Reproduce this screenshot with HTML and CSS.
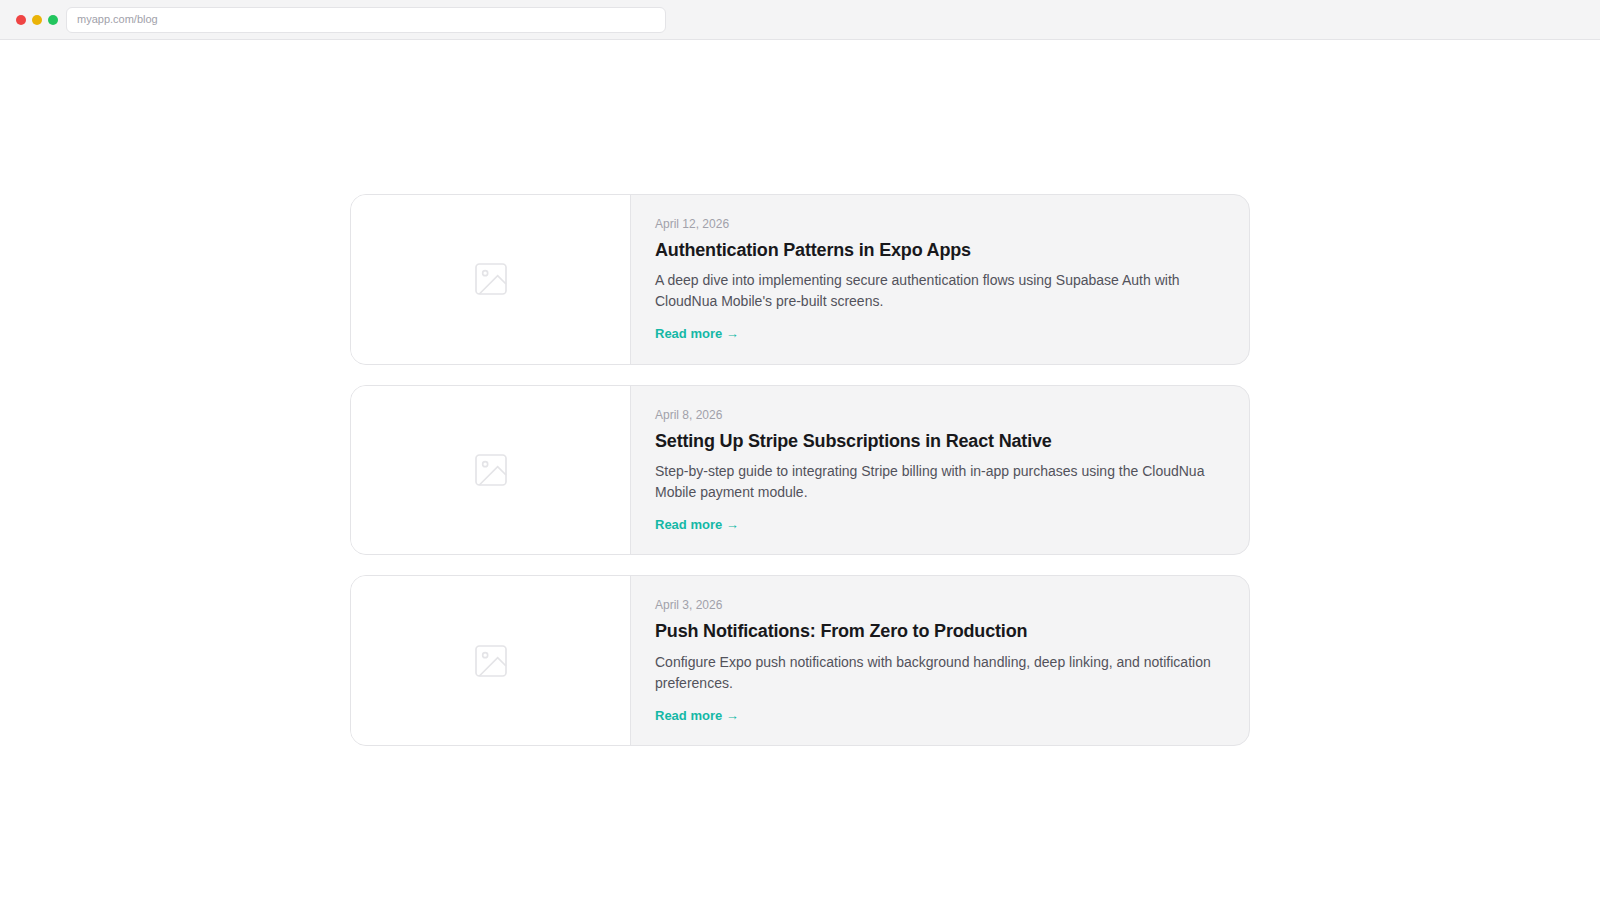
FILE: index.html
```html
<!DOCTYPE html>
<html lang="en">
<head>
  <meta charset="UTF-8" />
  <meta name="viewport" content="width=device-width, initial-scale=1.0"/>
  <title>Blog</title>
  <link rel="stylesheet" href="styles.css">
</head>
<body>

  <div class="browser-bar">
    <span class="dot red"></span>
    <span class="dot yellow"></span>
    <span class="dot green"></span>
    <div class="url">myapp.com/blog</div>
  </div>

  <main class="content">
    <div class="posts">
      <article class="post">
        <div class="thumb">
          <svg class="thumb-icon" viewBox="0 0 24 24"><rect x="3" y="3" width="18" height="18" rx="2"/><circle cx="8.5" cy="8.5" r="1.5"/><path d="M21 15l-5-5L5 21"/></svg>
        </div>
        <div class="post-body">
          <div class="date">April 12, 2026</div>
          <h2>Authentication Patterns in Expo Apps</h2>
          <p>A deep dive into implementing secure authentication flows using Supabase Auth with CloudNua Mobile's pre-built screens.</p>
          <a class="more">Read more →</a>
        </div>
      </article>

      <article class="post">
        <div class="thumb">
          <svg class="thumb-icon" viewBox="0 0 24 24"><rect x="3" y="3" width="18" height="18" rx="2"/><circle cx="8.5" cy="8.5" r="1.5"/><path d="M21 15l-5-5L5 21"/></svg>
        </div>
        <div class="post-body">
          <div class="date">April 8, 2026</div>
          <h2>Setting Up Stripe Subscriptions in React Native</h2>
          <p>Step-by-step guide to integrating Stripe billing with in-app purchases using the CloudNua Mobile payment module.</p>
          <a class="more">Read more →</a>
        </div>
      </article>

      <article class="post">
        <div class="thumb">
          <svg class="thumb-icon" viewBox="0 0 24 24"><rect x="3" y="3" width="18" height="18" rx="2"/><circle cx="8.5" cy="8.5" r="1.5"/><path d="M21 15l-5-5L5 21"/></svg>
        </div>
        <div class="post-body">
          <div class="date">April 3, 2026</div>
          <h2>Push Notifications: From Zero to Production</h2>
          <p>Configure Expo push notifications with background handling, deep linking, and notification preferences.</p>
          <a class="more">Read more →</a>
        </div>
      </article>
    </div>
  </main>

</body>
</html>
```
FILE: styles.css
```css
* { box-sizing: border-box; margin: 0; padding: 0; }
body {
  background: #fff;
  color: #18181b;
  font-family: "Liberation Sans", Arial, sans-serif;
  line-height: 1.5;
  height: 100vh;
  display: flex;
  flex-direction: column;
}
.browser-bar {
  height: 40px;
  flex-shrink: 0;
  display: flex;
  align-items: center;
  gap: 6px;
  padding: 0 16px;
  background: #f4f4f5;
  border-bottom: 1px solid #e4e4e7;
}
.dot {
  width: 10px;
  height: 10px;
  border-radius: 50%;
}
.red { background: #ef4444; }
.yellow { background: #eab308; }
.green { background: #22c55e; }
.url {
  width: 600px;
  height: 26px;
  margin-left: 2px;
  padding: 0 10px;
  font-size: 11px;
  line-height: 22px;
  color: #a1a1aa;
  background: #fff;
  border: 1px solid #e4e4e7;
  border-radius: 6px;
}
.content {
  flex: 1;
  display: flex;
  align-items: center;
  justify-content: center;
}
.posts {
  width: 900px;
  display: flex;
  flex-direction: column;
  gap: 20px;
}
.post {
  display: flex;
  overflow: hidden;
  background: #f4f4f5;
  border: 1px solid #e4e4e7;
  border-radius: 16px;
}
.thumb {
  width: 280px;
  flex-shrink: 0;
  display: flex;
  align-items: center;
  justify-content: center;
  background: #fff;
  border-right: 1px solid #e4e4e7;
}
.thumb-icon {
  width: 40px;
  height: 40px;
  fill: none;
  stroke: #e4e4e7;
  stroke-width: 1;
}
.post-body {
  flex: 1;
  padding: 20px 24px;
  display: flex;
  flex-direction: column;
  justify-content: center;
}
.date {
  margin-bottom: 6px;
  font-size: 12px;
  color: #a1a1aa;
}
h2 {
  margin-bottom: 8px;
  font-size: 18px;
  font-weight: 700;
  line-height: 1.3;
  letter-spacing: -0.01em;
}
p {
  margin-bottom: 12px;
  font-size: 14px;
  color: #52525b;
}
.more {
  font-size: 13px;
  font-weight: 600;
  color: #14b8a6;
}
```
